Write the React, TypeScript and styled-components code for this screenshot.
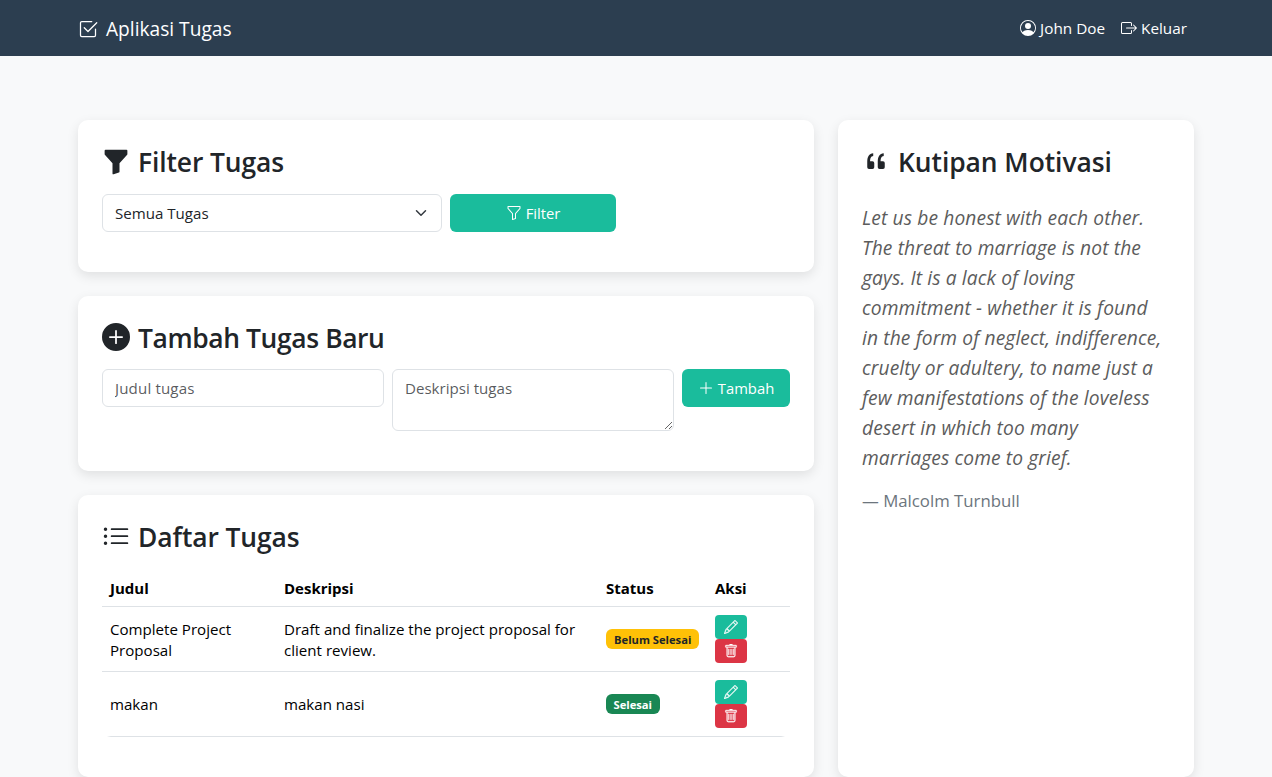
import React from 'react';
import styled, { createGlobalStyle, css } from 'styled-components';
import {
  BsBoxArrowRight,
  BsCheck2Square,
  BsFunnel,
  BsFunnelFill,
  BsListUl,
  BsPencil,
  BsPersonCircle,
  BsPlusCircleFill,
  BsPlusLg,
  BsQuote,
  BsTrash,
} from 'react-icons/bs';

const GlobalStyle = createGlobalStyle`
  *, *::before, *::after { box-sizing: border-box; }
  html { overflow: hidden; }
  body {
    margin: 0;
    background: #f8f9fa;
    color: #212529;
    font-family: "Segoe UI", "Open Sans", "Noto Sans", sans-serif;
    font-size: 15.1px;
    line-height: 24px;
  }
`;

const Navbar = styled.nav`
  height: 56px;
  background: #2c3e50;
  color: #fff;
`;

const Container = styled.div`
  width: 1140px;
  margin: 0 auto;
  padding: 0 12px;
`;

const NavInner = styled(Container)`
  height: 100%;
  display: flex;
  align-items: center;
  justify-content: space-between;
`;

const Brand = styled.a`
  display: flex;
  align-items: center;
  gap: 8px;
  font-size: 19.15px;
  line-height: 30px;
  padding-top: 2px;
  svg { width: 20px; height: 20px; }
`;

const NavLinks = styled.div`
  display: flex;
  gap: 16px;
  padding-right: 7px;
`;

const NavLink = styled.a`
  display: flex;
  align-items: center;
  gap: 4px;
  font-size: 15.3px;
  svg { width: 16px; height: 16px; }
`;

const Main = styled(Container)`
  display: flex;
  gap: 24px;
  padding-top: 64px;
`;

const LeftColumn = styled.div`
  flex: 0 0 736px;
  display: flex;
  flex-direction: column;
  gap: 24px;
`;

const Card = styled.section`
  background: #fff;
  border-radius: 10px;
  padding: 24px 24px 40px;
  box-shadow: 0 4px 12px rgba(0, 0, 0, 0.1);
`;

const QuoteCard = styled(Card)`
  flex: 1;
`;

const Title = styled.h3<{ $tracking?: number }>`
  display: flex;
  align-items: center;
  gap: 8px;
  margin: 0 0 16px;
  height: 33.6px;
  padding-top: 3.8px;
  font-size: 26.4px;
  font-weight: 600;
  letter-spacing: ${(p) => p.$tracking ?? -0.1}px;
  line-height: 33.6px;
  white-space: nowrap;
  svg { width: 28px; height: 28px; flex: none; margin-top: -2px; }
`;

const FormRow = styled.form`
  display: flex;
  align-items: flex-start;
  gap: 8px;
`;

const fieldBox = css`
  border: 1px solid #dee2e6;
  border-radius: 6px;
  background: #fff;
  color: #212529;
  font: inherit;
  line-height: 24px;
  padding: 6px 12px;
  margin: 0;
  outline: none;
`;

const Select = styled.div`
  ${fieldBox}
  width: 340px;
  height: 38px;
  display: flex;
  align-items: center;
  justify-content: space-between;
  svg { width: 16px; height: 12px; }
`;

const Input = styled.input`
  ${fieldBox}
  width: 282px;
  height: 38px;
  &::placeholder { color: rgba(33, 37, 41, 0.75); letter-spacing: 0.15px; }
`;

const Textarea = styled.textarea`
  ${fieldBox}
  width: 282px;
  height: 62px;
  resize: vertical;
  &::placeholder { color: rgba(33, 37, 41, 0.75); }
`;

const Button = styled.button<{ $width: number }>`
  width: ${(p) => p.$width}px;
  height: 38px;
  display: flex;
  align-items: center;
  justify-content: center;
  gap: 4px;
  padding: 0;
  border: 0;
  border-radius: 6px;
  background: #1abc9c;
  color: #fff;
  font: inherit;
  font-size: 14.8px;
  svg { width: 16px; height: 16px; }
`;

const Table = styled.table`
  width: 688px;
  table-layout: fixed;
  border-collapse: separate;
  border-spacing: 0;
  border-radius: 9px;
  overflow: hidden;
  color: #000;
  line-height: 21.3px;
`;

const Th = styled.th<{ $width: number }>`
  width: ${(p) => p.$width}px;
  padding: 9px 8px 7px;
  text-align: left;
  font-size: 15px;
  font-weight: 700;
  border-bottom: 1px solid #dee2e6;
`;

const Td = styled.td<{ $text?: boolean }>`
  padding: ${(p) => (p.$text ? '10px 8px 8px' : '8px')};
  height: 65px;
  vertical-align: middle;
  border-bottom: 1px solid #dee2e6;
`;

const Badge = styled.span<{ $done: boolean }>`
  display: block;
  width: fit-content;
  padding: 0 ${(p) => (p.$done ? '7.5px' : '8px')};
  height: 20px;
  border-radius: 6px;
  background: ${(p) => (p.$done ? '#198754' : '#ffc107')};
  color: ${(p) => (p.$done ? '#fff' : '#212529')};
  font-size: 11.2px;
  font-weight: 700;
  line-height: 21px;
  white-space: nowrap;
`;

const Actions = styled.div`
  display: flex;
  flex-direction: column;
`;

const ActionButton = styled.button<{ $danger?: boolean }>`
  width: 32px;
  height: 24px;
  display: flex;
  align-items: center;
  justify-content: center;
  padding: 0;
  border: 0;
  border-radius: 4px;
  background: ${(p) => (p.$danger ? '#dc3545' : '#1abc9c')};
  color: #fff;
  svg { width: 14px; height: 14px; stroke: currentColor; stroke-width: 0.3px; }
`;

const Quote = styled.p`
  margin: 25px 0 14px;
  color: #5c5c5c;
  font-size: 19.2px;
  font-style: italic;
  letter-spacing: 0.12px;
  line-height: 30px;
  white-space: nowrap;
`;

const Author = styled.p`
  margin: 0;
  color: #6c757d;
  font-size: 16.8px;
  line-height: 28px;
`;

const Chevron = () => (
  <svg viewBox="0 0 16 16" fill="none" stroke="#343a40" strokeWidth="2" strokeLinecap="round" strokeLinejoin="round">
    <path d="m2 5 6 6 6-6" />
  </svg>
);

const quoteLines = [
  'Let us be honest with each other.',
  'The threat to marriage is not the',
  'gays. It is a lack of loving',
  'commitment - whether it is found',
  'in the form of neglect, indifference,',
  'cruelty or adultery, to name just a',
  'few manifestations of the loveless',
  'desert in which too many',
  'marriages come to grief.',
];

const tasks = [
  {
    title: 'Complete Project Proposal',
    description: 'Draft and finalize the project proposal for client review.',
    done: false,
  },
  { title: 'makan', description: 'makan nasi', done: true },
];

export default function App() {
  return (
    <>
      <GlobalStyle />
      <Navbar>
        <NavInner>
          <Brand><BsCheck2Square />Aplikasi Tugas</Brand>
          <NavLinks>
            <NavLink><BsPersonCircle />John Doe</NavLink>
            <NavLink><BsBoxArrowRight />Keluar</NavLink>
          </NavLinks>
        </NavInner>
      </Navbar>
      <Main as="main">
        <LeftColumn>
          <Card>
            <Title><BsFunnelFill />Filter Tugas</Title>
            <FormRow>
              <Select>Semua Tugas<Chevron /></Select>
              <Button type="button" $width={166}><BsFunnel />Filter</Button>
            </FormRow>
          </Card>
          <Card>
            <Title $tracking={-0.38}><BsPlusCircleFill />Tambah Tugas Baru</Title>
            <FormRow>
              <Input placeholder="Judul tugas" />
              <Textarea placeholder="Deskripsi tugas" />
              <Button type="button" $width={108}><BsPlusLg />Tambah</Button>
            </FormRow>
          </Card>
          <Card>
            <Title><BsListUl />Daftar Tugas</Title>
            <Table>
              <thead>
                <tr>
                  <Th $width={174}>Judul</Th>
                  <Th $width={322}>Deskripsi</Th>
                  <Th $width={109}>Status</Th>
                  <Th $width={83}>Aksi</Th>
                </tr>
              </thead>
              <tbody>
                {tasks.map((task) => (
                  <tr key={task.title}>
                    <Td $text>{task.title}</Td>
                    <Td $text>{task.description}</Td>
                    <Td><Badge $done={task.done}>{task.done ? 'Selesai' : 'Belum Selesai'}</Badge></Td>
                    <Td>
                      <Actions>
                        <ActionButton><BsPencil /></ActionButton>
                        <ActionButton $danger><BsTrash /></ActionButton>
                      </Actions>
                    </Td>
                  </tr>
                ))}
              </tbody>
            </Table>
          </Card>
        </LeftColumn>
        <QuoteCard>
          <Title $tracking={-0.05}><BsQuote />Kutipan Motivasi</Title>
          <Quote>
            {quoteLines.map((line) => (
              <React.Fragment key={line}>{line}<br /></React.Fragment>
            ))}
          </Quote>
          <Author>— Malcolm Turnbull</Author>
        </QuoteCard>
      </Main>
    </>
  );
}
